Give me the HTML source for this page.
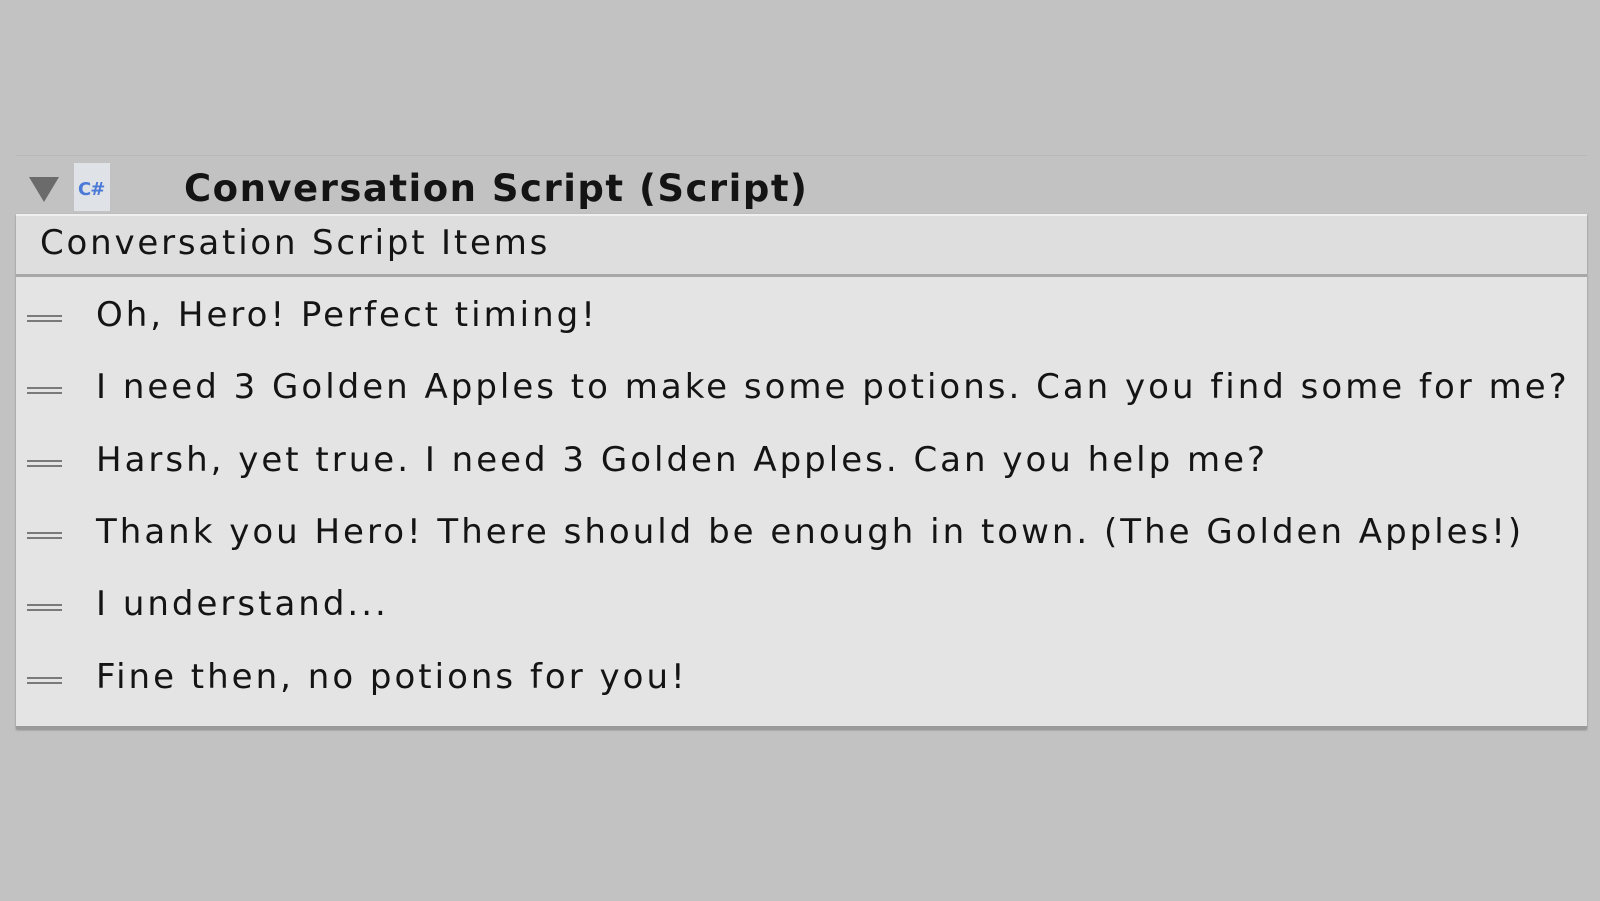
<!DOCTYPE html>
<html><head><style>
body{margin:0;width:1600px;height:901px;background:#c2c2c2;position:relative;overflow:hidden;font-family:"DejaVu Sans","Liberation Sans",sans-serif;color:#141414}
.topline{position:absolute;left:16px;top:155px;width:1571px;height:1px;background:#b8b8b8}
.tri{position:absolute;left:29px;top:177px;width:0;height:0;border-left:15px solid transparent;border-right:15px solid transparent;border-top:25px solid #6b6b6b}
.doc{position:absolute;left:74px;top:163px;width:36px;height:48px;background:#dfe2e6}
.doc span{position:absolute;left:4px;top:16px;font-size:18px;font-weight:bold;color:#4b79d8;letter-spacing:-1px}
.title{position:absolute;left:184px;top:167px;font-size:37px;line-height:44px;font-weight:bold;letter-spacing:1.5px;white-space:nowrap}
.panel{position:absolute;left:16px;top:214px;width:1571px;height:512px;background:#e4e4e4;border-bottom:3px solid #9a9a9a;box-shadow:0 1px 2px #888}
.hdr{position:absolute;left:0;top:0;width:100%;height:58px;background:#dedede;border-top:2px solid #efefef;border-bottom:3px solid #a8a8a8}
.t{position:absolute;font-size:34px;line-height:44px;letter-spacing:3px;white-space:nowrap}
.g{position:absolute;left:27px;width:35px;height:3px;border-top:2px solid #7a7a7a;border-bottom:2px solid #7a7a7a}
</style></head><body>
<div class="topline"></div>
<div class="tri"></div>
<div class="doc"><span>C#</span></div>
<div class="title">Conversation Script (Script)</div>
<div class="panel"><div class="hdr"></div></div>
<div class="t" style="left:40px;top:221px;letter-spacing:2.8px">Conversation Script Items</div>
<div class="g" style="top:315px"></div><div class="t" style="left:96px;top:293px">Oh, Hero! Perfect timing!</div>
<div class="g" style="top:387px"></div><div class="t" style="left:96px;top:365px">I need 3 Golden Apples to make some potions. Can you find some for me?</div>
<div class="g" style="top:460px"></div><div class="t" style="left:96px;top:438px">Harsh, yet true. I need 3 Golden Apples. Can you help me?</div>
<div class="g" style="top:532px"></div><div class="t" style="left:96px;top:510px">Thank you Hero! There should be enough in town. (The Golden Apples!)</div>
<div class="g" style="top:604px"></div><div class="t" style="left:96px;top:582px">I understand...</div>
<div class="g" style="top:677px"></div><div class="t" style="left:96px;top:655px">Fine then, no potions for you!</div>
</body></html>
